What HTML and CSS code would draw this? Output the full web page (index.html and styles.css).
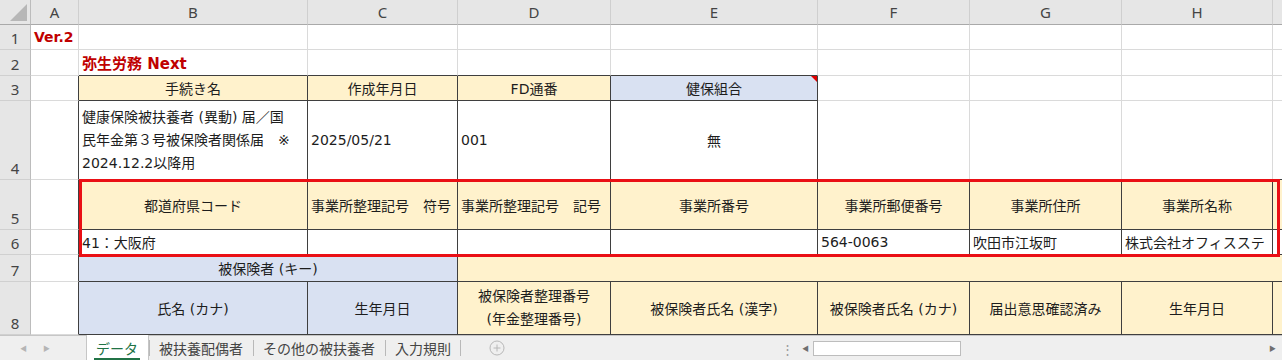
FILE: index.html
```html
<!DOCTYPE html>
<html lang="ja">
<head>
<meta charset="utf-8">
<title>Sheet</title>
<link rel="stylesheet" href="styles.css">
</head>
<body>
<div class="page">
  <div class="viewport">
    <div class="sheet">
      <!-- column headers -->
      <div class="corner"><span class="tri"></span></div>
      <div class="ch">A</div>
      <div class="ch">B</div>
      <div class="ch">C</div>
      <div class="ch">D</div>
      <div class="ch">E</div>
      <div class="ch">F</div>
      <div class="ch">G</div>
      <div class="ch">H</div>
      <div class="ch"></div>

      <!-- row 1 -->
      <div class="rh">1</div>
      <div class="c l ver">Ver.2</div>
      <div class="c"></div><div class="c"></div><div class="c"></div><div class="c"></div>
      <div class="c"></div><div class="c"></div><div class="c"></div><div class="c"></div>

      <!-- row 2 -->
      <div class="rh">2</div>
      <div class="c"></div>
      <div class="c l bt title">弥生労務 Next</div>
      <div class="c bt"></div><div class="c bt"></div><div class="c bt"></div>
      <div class="c"></div><div class="c"></div><div class="c"></div><div class="c"></div>

      <!-- row 3 -->
      <div class="rh">3</div>
      <div class="c bl"></div>
      <div class="c b tan ctr">手続き名</div>
      <div class="c b tan ctr">作成年月日</div>
      <div class="c b tan ctr">FD通番</div>
      <div class="c b blue ctr note">健保組合<span class="flag"></span></div>
      <div class="c"></div><div class="c"></div><div class="c"></div><div class="c"></div>

      <!-- row 4 -->
      <div class="rh">4</div>
      <div class="c bl"></div>
      <div class="c b l wrap">健康保険被扶養者 (異動) 届／国<br>民年金第３号被保険者関係届　※<br>2024.12.2以降用</div>
      <div class="c b l">2025/05/21</div>
      <div class="c b l">001</div>
      <div class="c b ctr">無</div>
      <div class="c bt"></div><div class="c bt"></div><div class="c bt"></div><div class="c bt"></div>

      <!-- row 5 -->
      <div class="rh">5</div>
      <div class="c bl"></div>
      <div class="c b tan ctr">都道府県コード</div>
      <div class="c b tan l">事業所整理記号　符号</div>
      <div class="c b tan l">事業所整理記号　記号</div>
      <div class="c b tan ctr">事業所番号</div>
      <div class="c b tan ctr">事業所郵便番号</div>
      <div class="c b tan ctr">事業所住所</div>
      <div class="c b tan ctr">事業所名称</div>
      <div class="c b tan"></div>

      <!-- row 6 -->
      <div class="rh">6</div>
      <div class="c bl"></div>
      <div class="c b l">41：大阪府</div>
      <div class="c b"></div>
      <div class="c b"></div>
      <div class="c b"></div>
      <div class="c b l">564-0063</div>
      <div class="c b l">吹田市江坂町</div>
      <div class="c b l">株式会社オフィスステ</div>
      <div class="c b"></div>

      <!-- row 7 -->
      <div class="rh">7</div>
      <div class="c bl"></div>
      <div class="c b blue ctr span2">被保険者 (キー)</div>
      <div class="c b tan span6"></div>

      <!-- row 8 -->
      <div class="rh">8</div>
      <div class="c bl"></div>
      <div class="c b blue ctr">氏名 (カナ)</div>
      <div class="c b blue ctr">生年月日</div>
      <div class="c b tan ctr wrap">被保険者整理番号<br>(年金整理番号)</div>
      <div class="c b tan ctr">被保険者氏名 (漢字)</div>
      <div class="c b tan ctr">被保険者氏名 (カナ)</div>
      <div class="c b tan ctr">届出意思確認済み</div>
      <div class="c b tan ctr">生年月日</div>
      <div class="c b tan"></div>
    </div>
    <div class="redbox"></div>
  </div>

  <div class="tabbar">
    <div class="nav"><span class="arr">&#9664;</span><span class="arr">&#9654;</span></div>
    <div class="tabs">
      <div class="tab active"><span>データ</span></div>
      <div class="tab">被扶養配偶者</div>
      <div class="tab">その他の被扶養者</div>
      <div class="tab last">入力規則</div>
      <div class="add">
        <svg width="16" height="16" viewBox="0 0 16 16"><circle cx="8" cy="8" r="7" fill="none" stroke="#b8b8b8" stroke-width="1"/><path d="M8 4.5v7M4.5 8h7" stroke="#b8b8b8" stroke-width="1"/></svg>
      </div>
    </div>
    <div class="split">&#8942;</div>
    <div class="hscroll">
      <span class="sarr">&#9664;</span>
      <div class="thumb"></div>
      <div class="track"></div>
      <span class="sarr">&#9654;</span>
    </div>
  </div>
</div>
</body>
</html>
```

FILE: styles.css
```css
* { box-sizing: border-box; }
html, body { margin: 0; padding: 0; }
body {
  width: 1282px;
  height: 360px;
  overflow: hidden;
  background: #fff;
  font-family: "DejaVu Sans", "Noto Sans CJK JP", sans-serif;
  font-size: 14px;
  color: #1d1d1d;
}
.page { width: 1282px; height: 360px; display: flex; flex-direction: column; }
.viewport { position: relative; height: 335px; overflow: hidden; }

.sheet {
  display: grid;
  grid-template-columns: 31px 48px 229px 150px 153px 207px 152px 152px 151px 151px;
  grid-template-rows: 25px 25px 26px 25px 79px 50px 25px 27px 53px;
  width: 1424px;
}

.corner {
  background: #e6e6e6;
  border-right: 1px solid #bcbcbc;
  border-bottom: 1px solid #a9a9a9;
  display: flex;
  justify-content: flex-end;
  align-items: flex-end;
  padding: 0 3px 3px 0;
}
.tri {
  width: 0; height: 0;
  border-left: 17px solid transparent;
  border-bottom: 17px solid #b7b7b7;
}
.ch {
  background: #e6e6e6;
  border-right: 1px solid #cfcfcf;
  border-bottom: 1px solid #a9a9a9;
  display: flex;
  align-items: center;
  justify-content: center;
  font-family: "Noto Sans", sans-serif;
  font-size: 15px;
  color: #444;
}
.rh {
  background: #e6e6e6;
  border-right: 1px solid #bcbcbc;
  border-bottom: 1px solid #d0d0d0;
  display: flex;
  align-items: flex-end;
  justify-content: center;
  padding-bottom: 0;
  font-family: "Noto Sans", sans-serif;
  font-size: 15px;
  color: #444;
  line-height: 22px;
}

.c {
  border-right: 1px solid #dadada;
  border-bottom: 1px solid #dadada;
  display: flex;
  align-items: center;
  overflow: hidden;
  white-space: nowrap;
  min-width: 0;
}
.c.l { justify-content: flex-start; padding-left: 3px; }
.c.ctr { justify-content: center; text-align: center; }
.c.b { border-right-color: #3f3f3f; border-bottom-color: #3f3f3f; }
.c.bt { border-bottom-color: #3f3f3f; }
.c.bl { border-right-color: #3f3f3f; }
.tan { background: #fff2cc; }
.blue { background: #d9e1f2; }
.wrap { white-space: normal; line-height: 23px; }
.span2 { grid-column: span 2; }
.span6 { grid-column: span 6; }

.ver { color: #c00000; font-weight: bold; padding-left: 2px; }
.title { color: #c00000; font-weight: bold; font-size: 15px; }

.note { position: relative; }
.flag {
  position: absolute;
  top: 0; right: 0;
  width: 0; height: 0;
  border-top: 6px solid #e00000;
  border-left: 6px solid transparent;
}

.redbox {
  position: absolute;
  left: 79px;
  top: 179px;
  width: 1201px;
  height: 78px;
  border: 3px solid #ea0f15;
  pointer-events: none;
}

.tabbar {
  height: 25px;
  background: #efefef;
  border-top: 1px solid #c6c6c6;
  display: flex;
  align-items: stretch;
  font-family: "Noto Sans CJK JP", sans-serif;
  font-size: 14px;
  color: #444;
}
.nav {
  width: 86px;
  display: flex;
  align-items: center;
  padding-left: 20px;
  gap: 16px;
}
.arr { font-size: 7px; color: #b5b5b5; }
.tabs { display: flex; align-items: stretch; width: 690px; }
.tab {
  display: flex;
  align-items: center;
  padding: 0 10px;
  position: relative;
  line-height: 1;
}
.tab + .tab::before, .tab.last::after {
  content: "";
  position: absolute;
  top: 4px;
  bottom: 4px;
  width: 1px;
  background: #b9b9b9;
}
.tab + .tab::before { left: 0; }
.tab.last::after { right: 0; }
.tab.active {
  background: #fff;
  color: #217346;
  padding: 0 8px 0 7px;
  margin-top: -1px;
  border-left: 1px solid #c6c6c6;
  border-right: 1px solid #c6c6c6;
}
.tab.active span {
  height: 100%;
  display: flex;
  align-items: center;
  border-bottom: 2px solid #217346;
  padding: 2px 2px 0;
}
.add { display: flex; align-items: center; margin-left: 28px; }
.split {
  width: 22px;
  display: flex;
  align-items: center;
  justify-content: center;
  color: #9a9a9a;
  font-size: 13px;
}
.hscroll {
  flex: 1;
  display: flex;
  align-items: center;
  padding: 0 2px 0 0;
}
.sarr { font-size: 7px; color: #6f6f6f; width: 15px; text-align: center; }
.thumb {
  width: 148px;
  height: 15px;
  background: #fff;
  border: 1px solid #bdbdbd;
}
.track { flex: 1; }
```
